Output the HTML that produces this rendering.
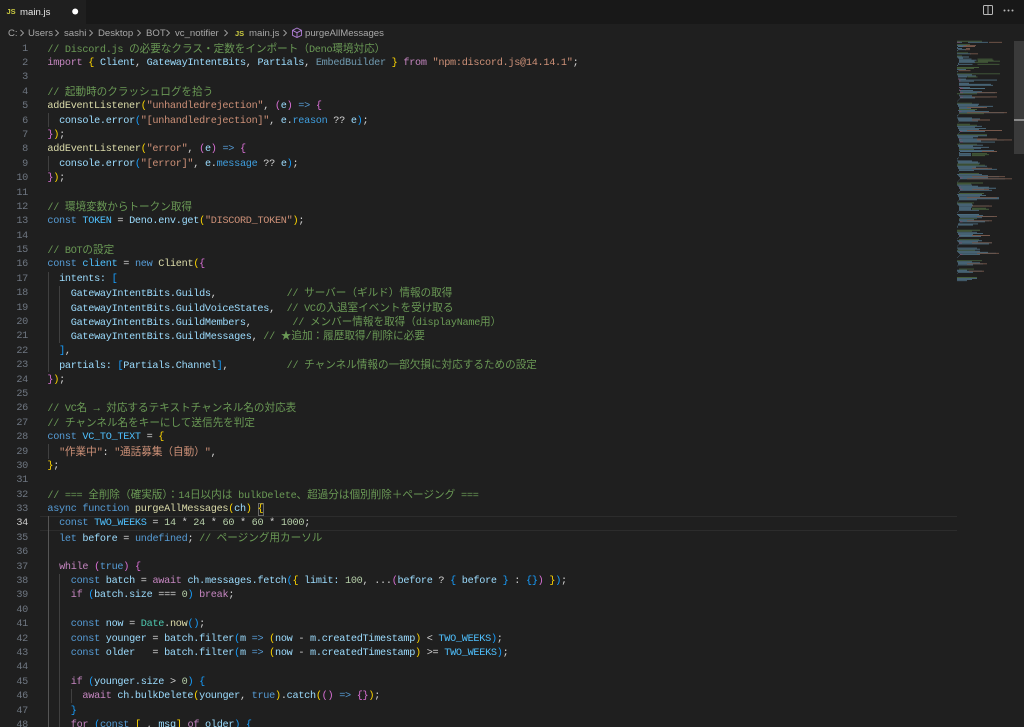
<!DOCTYPE html>
<html lang="ja"><head><meta charset="utf-8"><title>main.js</title>
<style>
html,body{margin:0;padding:0;background:#1f1f1f;width:1024px;height:727px;overflow:hidden}
#root{position:absolute;left:0;top:0;width:1024px;height:727px;overflow:hidden;background:#1f1f1f}
#tabs{position:absolute;left:0;top:0;width:1024px;height:24px;background:#181818}
#tab{position:absolute;left:0;top:0;width:86px;height:24px;background:#1f1f1f}
.ui{position:absolute;font:9.6px "Liberation Sans",sans-serif;white-space:pre;line-height:14px;filter:blur(.25px)}
.cr{color:#a8a8a8}
.js{color:#cbcb41;font-weight:bold;font-size:7.5px}
#nums{position:absolute;left:0;top:42.6px;width:28px;text-align:right;font:10.2px/14.4px "Liberation Mono",monospace;letter-spacing:-.28px;color:#6e7681;filter:blur(.3px)}
#nums div{height:14.4px}
#code{position:absolute;left:47.4px;top:42.6px;font:10.2px/14.4px "Liberation Mono",monospace;letter-spacing:-.28px;color:#d4d4d4;filter:blur(.3px)}
#code div{height:14.4px;white-space:pre}
#code i{font:10.6px/14.4px "Liberation Mono","Noto Sans CJK JP",sans-serif;font-style:normal;letter-spacing:0}
.k{color:#c586c0}.b{color:#569cd6}.v{color:#9cdcfe}.f{color:#dcdcaa}.s{color:#ce9178}.n{color:#b5cea8}.t{color:#4ec9b0}.u{color:#4fc1ff}.c{color:#6a9955}
.y{color:#ffd700}.p{color:#da70d6}.l{color:#179fff}.m{color:#3f9fe0}.o{opacity:.65}
.g{position:absolute;width:1px;background:#404040}
#cur{position:absolute;left:40px;right:67px;top:516.3px;height:13px;border-top:1px solid #2c2c2c;border-bottom:1px solid #2c2c2c}
#box{position:absolute;left:257.5px;top:503px;width:6px;height:13px;border:1px solid #6a6a6a;box-sizing:border-box}
</style></head><body>
<div id="root">
<div id="tabs"><div id="tab"></div></div>
<div class="ui js" style="left:6.5px;top:4.500px">JS</div>
<div class="ui" style="left:20px;top:5.500px;color:#e6e6e6">main.js</div>
<svg style="position:absolute;left:70px;top:6px" width="10" height="12"><circle cx="5.2" cy="5.5" r="3" fill="#fff"/></svg>
<svg style="position:absolute;left:980px;top:3px" width="40" height="16" fill="none" stroke="#b8b8b8">
<rect x="3.5" y="2.5" width="9" height="9" rx="1"/><path d="M8 2.5v9"/>
<g fill="#b8b8b8" stroke="none"><circle cx="24.5" cy="7.5" r="1"/><circle cx="28.5" cy="7.5" r="1"/><circle cx="32.5" cy="7.5" r="1"/></g></svg>
<div class="ui cr" style="left:8px;top:26.500px">C:</div>
<div class="ui cr" style="left:28px;top:26.500px">Users</div>
<div class="ui cr" style="left:64px;top:26.500px">sashi</div>
<div class="ui cr" style="left:98px;top:26.500px">Desktop</div>
<div class="ui cr" style="left:146px;top:26.500px">BOT</div>
<div class="ui cr" style="left:175px;top:26.500px">vc_notifier</div>
<div class="ui js" style="left:235px;top:26.500px">JS</div>
<div class="ui cr" style="left:249px;top:26.500px">main.js</div>
<div class="ui cr" style="left:305px;top:26.500px">purgeAllMessages</div>
<svg style="position:absolute;left:0;top:26px" width="320" height="14" fill="none" stroke="#a0a0a0" stroke-width=".9">
<path d="M20.500 4l3 3-3 3M55.500 4l3 3-3 3M89.500 4l3 3-3 3M137.500 4l3 3-3 3M166.500 4l3 3-3 3M224.500 4l3 3-3 3M283.500 4l3 3-3 3"/>
<path d="M297 2l4.500 2.300v5L297 11.500l-4.500-2.200v-5zM292.500 4.300l4.500 2.400 4.500-2.400M297 6.700v4.800" stroke="#b180d7"/></svg>
<div id="cur"></div>
<div id="box"></div>
<div class="g" style="left:47.500px;top:113.100px;height:14.400px"></div>
<div class="g" style="left:47.500px;top:156.300px;height:14.400px"></div>
<div class="g" style="left:47.500px;top:271.500px;height:100.800px"></div>
<div class="g" style="left:59px;top:285.900px;height:57.600px"></div>
<div class="g" style="left:47.500px;top:444.300px;height:14.400px"></div>
<div class="g" style="left:47.500px;top:516.300px;height:211px;background:#555"></div>
<div class="g" style="left:59px;top:573.900px;height:154px"></div>
<div class="g" style="left:70.700px;top:689.100px;height:14.400px"></div>
<div id="nums"><div>1</div><div>2</div><div>3</div><div>4</div><div>5</div><div>6</div><div>7</div><div>8</div><div>9</div><div>10</div><div>11</div><div>12</div><div>13</div><div>14</div><div>15</div><div>16</div><div>17</div><div>18</div><div>19</div><div>20</div><div>21</div><div>22</div><div>23</div><div>24</div><div>25</div><div>26</div><div>27</div><div>28</div><div>29</div><div>30</div><div>31</div><div>32</div><div>33</div><div style="color:#ccc">34</div><div>35</div><div>36</div><div>37</div><div>38</div><div>39</div><div>40</div><div>41</div><div>42</div><div>43</div><div>44</div><div>45</div><div>46</div><div>47</div><div>48</div></div>
<div id="code">
<div class="c">// Discord.js <i>の必要なクラス・定数をインポート（</i>Deno<i>環境対応）</i></div>
<div><span class="k">import</span> <span class="y">{</span> <span class="v">Client</span>, <span class="v">GatewayIntentBits</span>, <span class="v">Partials</span>, <span class="v o">EmbedBuilder</span> <span class="y">}</span> <span class="k">from</span> <span class="s">"npm:discord.js@14.14.1"</span>;</div>
<div> </div>
<div class="c">// <i>起動時のクラッシュログを拾う</i></div>
<div><span class="f">addEventListener</span><span class="y">(</span><span class="s">"unhandledrejection"</span>, <span class="p">(</span><span class="v">e</span><span class="p">)</span> <span class="b">=&gt;</span> <span class="p">{</span></div>
<div>  <span class="v">console.error</span><span class="l">(</span><span class="s">"[unhandledrejection]"</span>, <span class="v">e</span>.<span class="m">reason</span> ?? <span class="v">e</span><span class="l">)</span>;</div>
<div><span class="p">}</span><span class="y">)</span>;</div>
<div><span class="f">addEventListener</span><span class="y">(</span><span class="s">"error"</span>, <span class="p">(</span><span class="v">e</span><span class="p">)</span> <span class="b">=&gt;</span> <span class="p">{</span></div>
<div>  <span class="v">console.error</span><span class="l">(</span><span class="s">"[error]"</span>, <span class="v">e</span>.<span class="m">message</span> ?? <span class="v">e</span><span class="l">)</span>;</div>
<div><span class="p">}</span><span class="y">)</span>;</div>
<div> </div>
<div class="c">// <i>環境変数からトークン取得</i></div>
<div><span class="b">const</span> <span class="u">TOKEN</span> = <span class="v">Deno.env.get</span><span class="y">(</span><span class="s">"DISCORD_TOKEN"</span><span class="y">)</span>;</div>
<div> </div>
<div class="c">// BOT<i>の設定</i></div>
<div><span class="b">const</span> <span class="u">client</span> = <span class="b">new</span> <span class="f">Client</span><span class="y">(</span><span class="p">{</span></div>
<div>  <span class="v">intents:</span> <span class="l">[</span></div>
<div>    <span class="v">GatewayIntentBits.Guilds</span>,            <span class="c">// <i>サーバー（ギルド）情報の取得</i></span></div>
<div>    <span class="v">GatewayIntentBits.GuildVoiceStates</span>,  <span class="c">// VC<i>の入退室イベントを受け取る</i></span></div>
<div>    <span class="v">GatewayIntentBits.GuildMembers</span>,       <span class="c">// <i>メンバー情報を取得（</i>displayName<i>用）</i></span></div>
<div>    <span class="v">GatewayIntentBits.GuildMessages</span>, <span class="c">// <i>★追加：履歴取得/削除に必要</i></span></div>
<div>  <span class="l">]</span>,</div>
<div>  <span class="v">partials:</span> <span class="l">[</span><span class="v">Partials.Channel</span><span class="l">]</span>,          <span class="c">// <i>チャンネル情報の一部欠損に対応するための設定</i></span></div>
<div><span class="p">}</span><span class="y">)</span>;</div>
<div> </div>
<div class="c">// VC<i>名 → 対応するテキストチャンネル名の対応表</i></div>
<div class="c">// <i>チャンネル名をキーにして送信先を判定</i></div>
<div><span class="b">const</span> <span class="u">VC_TO_TEXT</span> = <span class="y">{</span></div>
<div>  <span class="s">"<i>作業中</i>"</span>: <span class="s">"<i>通話募集（自動）</i>"</span>,</div>
<div><span class="y">}</span>;</div>
<div> </div>
<div class="c">// === <i>全削除（確実版）：</i>14<i>日以内は</i> bulkDelete<i>、超過分は個別削除＋ページング</i> ===</div>
<div><span class="b">async</span> <span class="b">function</span> <span class="f">purgeAllMessages</span><span class="y">(</span><span class="v">ch</span><span class="y">)</span> <span class="y">{</span></div>
<div>  <span class="b">const</span> <span class="u">TWO_WEEKS</span> = <span class="n">14</span> * <span class="n">24</span> * <span class="n">60</span> * <span class="n">60</span> * <span class="n">1000</span>;</div>
<div>  <span class="b">let</span> <span class="v">before</span> = <span class="b">undefined</span>; <span class="c">// <i>ページング用カーソル</i></span></div>
<div> </div>
<div>  <span class="k">while</span> <span class="p">(</span><span class="b">true</span><span class="p">)</span> <span class="p">{</span></div>
<div>    <span class="b">const</span> <span class="v">batch</span> = <span class="k">await</span> <span class="v">ch.messages.fetch</span><span class="l">(</span><span class="y">{</span> <span class="v">limit:</span> <span class="n">100</span>, ...<span class="p">(</span><span class="v">before</span> ? <span class="l">{</span> <span class="v">before</span> <span class="l">}</span> : <span class="l">{}</span><span class="p">)</span> <span class="y">}</span><span class="l">)</span>;</div>
<div>    <span class="k">if</span> <span class="l">(</span><span class="v">batch.size</span> === <span class="n">0</span><span class="l">)</span> <span class="k">break</span>;</div>
<div> </div>
<div>    <span class="b">const</span> <span class="v">now</span> = <span class="t">Date</span>.<span class="f">now</span><span class="l">()</span>;</div>
<div>    <span class="b">const</span> <span class="v">younger</span> = <span class="v">batch.filter</span><span class="l">(</span><span class="v">m</span> <span class="b">=&gt;</span> <span class="y">(</span><span class="v">now</span> - <span class="v">m.createdTimestamp</span><span class="y">)</span> &lt; <span class="u">TWO_WEEKS</span><span class="l">)</span>;</div>
<div>    <span class="b">const</span> <span class="v">older</span>   = <span class="v">batch.filter</span><span class="l">(</span><span class="v">m</span> <span class="b">=&gt;</span> <span class="y">(</span><span class="v">now</span> - <span class="v">m.createdTimestamp</span><span class="y">)</span> &gt;= <span class="u">TWO_WEEKS</span><span class="l">)</span>;</div>
<div> </div>
<div>    <span class="k">if</span> <span class="l">(</span><span class="v">younger.size</span> &gt; <span class="n">0</span><span class="l">)</span> <span class="l">{</span></div>
<div>      <span class="k">await</span> <span class="v">ch.bulkDelete</span><span class="y">(</span><span class="v">younger</span>, <span class="b">true</span><span class="y">)</span>.<span class="v">catch</span><span class="y">(</span><span class="p">()</span> <span class="b">=&gt;</span> <span class="p">{}</span><span class="y">)</span>;</div>
<div>    <span class="l">}</span></div>
<div>    <span class="k">for</span> <span class="l">(</span><span class="b">const</span> <span class="y">[</span><span class="v">_</span>, <span class="v">msg</span><span class="y">]</span> <span class="k">of</span> <span class="v">older</span><span class="l">)</span> <span class="l">{</span></div>
</div>
<svg style="position:absolute;left:1014px;top:41px" width="10" height="686"><rect width="10" height="113" fill="#3a3a3a"/><rect y="78" width="10" height="2" fill="#8a8a8a"/></svg>
<svg style="position:absolute;left:950px;top:36px;filter:blur(.35px)" width="64" height="260" opacity=".5">
<g transform="translate(7,4.200) scale(.5,1.05)" fill="none" stroke-width=".85">
<path stroke="#6a9955" d="M0 1h50M0 4h26M0 12h22M0 15h10M41 18h30M41 19h32M42 20h44M36 21h26M41 23h44M0 26h44M0 27h34M0 32h86M21 35h20M0 51h40M0 60h30M4 66h36M4 70h50M0 80h26M0 81h40M0 90h60M0 99h40M4 104h30M30 108h30M30 109h34M30 110h26M0 118h44M0 119h56M4 127h40M0 136h52M0 137h28M4 146h50M0 155h34M30 160h28M30 161h34M4 170h36M0 181h46M0 182h30M4 190h40M0 200h36M0 210h50M4 218h30M0 226h40"/>
<path stroke="#7ab8df" d="M0 2h10M22 2h40M0 5h20M2 6h24M0 7h2M0 8h10M2 9h16M0 10h2M0 13h28M0 16h24M2 17h10M4 18h25M4 19h35M4 20h31M4 21h32M2 22h2M2 23h29M0 24h2M0 28h18M0 30h2M0 33h30M2 34h36M2 35h18M2 37h16M4 38h76M4 39h30M4 41h20M4 42h64M4 43h68M4 45h22M6 46h50M4 47h1M4 48h28M6 49h44M6 50h70M4 52h1M4 53h26M6 54h60M6 55h30M4 56h1M2 57h1M0 58h1M0 61h44M2 62h40M2 63h70M4 64h50M4 65h24M2 67h34M4 68h60M4 69h90M2 71h1M0 72h2M0 74h30M2 75h44M2 76h60M4 77h38M2 78h1M0 82h50M2 83h34M2 84h56M4 85h40M4 86h76M6 87h50M4 88h1M2 89h1M0 91h60M2 92h40M2 93h30M4 94h66M4 95h90M4 96h44M6 97h70M4 98h1M2 100h50M2 101h30M4 102h60M4 103h44M4 105h70M6 106h50M4 107h2M4 108h24M4 109h24M4 110h24M2 112h1M0 113h2M0 115h30M2 116h40M2 117h44M0 120h60M2 121h36M2 122h60M4 123h76M4 124h30M2 125h1M0 128h50M2 129h60M4 130h80M6 131h56M6 132h90M4 133h1M2 134h1M0 135h1M0 138h30M2 139h40M4 140h60M4 141h74M6 142h48M6 143h64M4 144h1M2 145h1M0 147h50M2 148h56M2 149h44M4 150h80M4 151h80M4 152h36M2 153h1M0 154h1M0 156h30M2 157h30M4 158h60M4 159h26M4 160h24M4 161h24M4 162h40M2 163h1M0 164h1M0 166h44M2 167h50M4 168h70M6 169h44M4 171h30M4 172h60M6 173h50M4 174h1M2 175h40M2 176h30M0 177h1M0 178h2M0 183h40M2 184h50M2 185h30M4 186h60M4 187h44M2 188h1M0 189h1M0 191h50M2 192h40M4 193h66M4 194h60M2 195h1M0 196h1M0 198h40M2 199h44M0 201h46M2 202h60M4 203h74M6 204h40M4 205h1M2 206h1M0 207h1M0 211h30M2 212h44M2 213h50M2 214h30M0 215h1M0 219h20M0 220h50M2 221h30M0 222h1M0 227h40M0 228h30M0 229h20"/>
<path stroke="#ce9178" d="M64 2h26M18 5h20M12 6h24M18 8h8M16 9h10M26 13h16M3 29h24M40 50h40M30 54h50M20 64h40M20 69h80M30 76h36M20 86h70M40 94h40M40 95h70M50 106h30M30 122h40M30 130h66M20 132h90M30 142h34M20 150h60M30 158h40M40 168h40M20 172h50M30 186h36M30 193h40M40 203h44M20 213h40M24 220h30"/>
<path stroke="#c586c0" d="M0 2h6M2 37h5M4 39h3M4 45h3M6 46h6M4 48h4M6 50h6M6 54h6M4 68h5M6 87h5M4 94h5M6 97h6M6 131h5M4 140h4M6 142h5M6 173h5M4 186h3M4 193h6M6 204h5"/>
</g></svg>
</div>
</body></html>
